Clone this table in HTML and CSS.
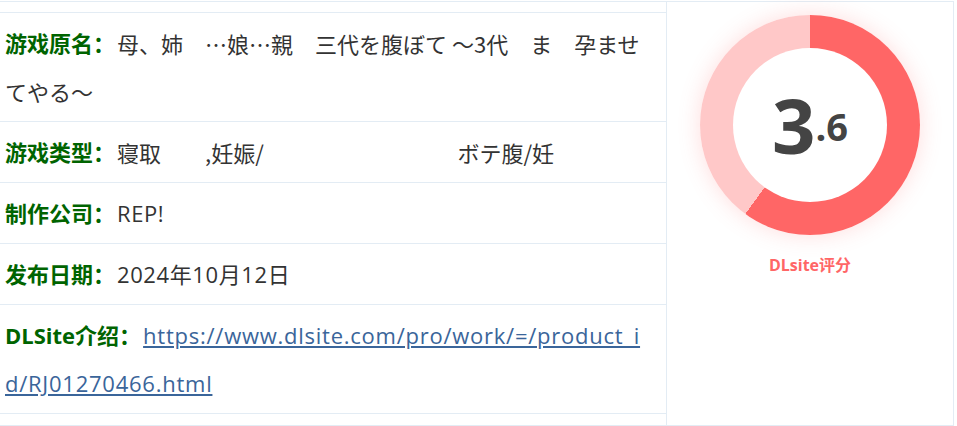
FILE: index.html
```html
<!DOCTYPE html>
<html lang="zh">
<head>
<meta charset="utf-8">
<title>DLsite</title>
<link rel="stylesheet" href="styles.css">
</head>
<body>
<div class="card">
  <div class="info">
    <div class="row row-cut"></div>
    <div class="row"><span class="label">游戏原名：</span><span class="value jp">母、姉<span class="mask">、</span>…娘…親<span class="mask">子</span>三代を腹ぼて ～3代<span class="mask">全</span>ま<span class="mask">と</span>孕ませてやる～</span></div>
    <div class="row"><span class="label">游戏类型：</span><span class="value jp">寝取<span class="mask">られ</span>,妊娠/<span class="mask">孕ませ,中出し,母乳,</span>ボテ腹/妊<span class="mask">婦</span></span></div>
    <div class="row"><span class="label">制作公司：</span><span class="value wide">REP!</span></div>
    <div class="row"><span class="label">发布日期：</span><span class="value wide">2024年10月12日</span></div>
    <div class="row"><span class="label">DLSite介绍：</span><a class="link" href="#">https://www.dlsite.com/pro/work/=/product_id/RJ01270466.html</a></div>
    <div class="row row-cut last"></div>
  </div>
  <div class="score">
    <div class="donut">
      <div class="hole"><span class="big">3</span><span class="small">.6</span></div>
    </div>
    <div class="score-label">DLsite评分</div>
  </div>
</div>
</body>
</html>
```
FILE: styles.css
```css
html, body {
  margin: 0;
  padding: 0;
  background: #fff;
}
body {
  font-family: "Open Sans", "Noto Sans CJK SC", sans-serif;
  padding-top: 1px;
}
.card {
  display: flex;
  width: 953px;
  height: 423px;
  border-top: 1px solid #e3ecf4;
  border-right: 1px solid #e3ecf4;
  border-bottom: 1px solid #e3ecf4;
}
.info {
  width: 666px;
  border-right: 1px solid #e3ecf4;
  display: flex;
  flex-direction: column;
}
.row {
  padding: 6px 16px 6px 5px;
  border-bottom: 1px solid #e3ecf4;
  font-size: 22px;
  line-height: 48px;
  color: #333;
  word-break: break-all;
}
.row-cut {
  height: 10px;
  padding: 0;
  flex: none;
}
.row-cut.last {
  border-bottom: none;
  height: 9px;
}
.label {
  color: #006400;
  font-weight: bold;
  margin-right: 2px;
}
.value {
  color: #333;
}
.wide {
  letter-spacing: 0.6px;
}
.jp {
  font-family: "Noto Sans CJK JP", "Noto Sans CJK SC", sans-serif;
  vertical-align: top;
}
.mask {
  color: #fff;
}
.link {
  color: #3a659a;
  text-decoration: underline;
  letter-spacing: 0.75px;
}
.score {
  flex: 1;
  display: flex;
  flex-direction: column;
  align-items: center;
  padding-top: 13px;
}
.donut {
  width: 220px;
  height: 220px;
  border-radius: 50%;
  background: conic-gradient(#ff6666 0 60%, #ffc8c8 60% 100%);
  box-shadow: 0 0 22px rgba(255, 102, 102, 0.22);
  display: flex;
  align-items: center;
  justify-content: center;
}
.hole {
  width: 154px;
  height: 154px;
  border-radius: 50%;
  background: #fff;
  display: flex;
  align-items: baseline;
  justify-content: center;
  color: #444;
  font-family: "Open Sans", "Noto Sans", sans-serif;
  font-weight: bold;
  line-height: 154px;
}
.big {
  font-size: 76px;
}
.small {
  font-size: 38px;
  position: relative;
  top: -13px;
}
.score-label {
  margin-top: 20px;
  color: #ff6666;
  font-weight: bold;
  font-size: 16px;
  line-height: 20px;
}
```
